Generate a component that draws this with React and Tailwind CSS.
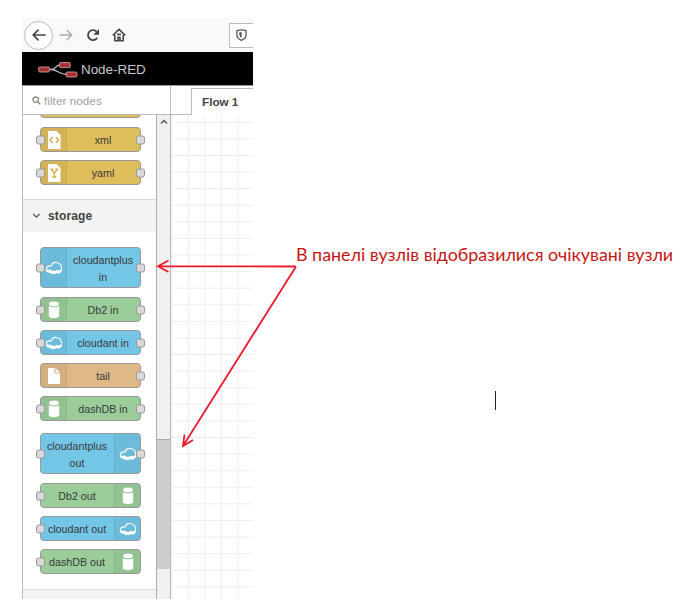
import React from "react";

const COLORS = {
  yellow: "bg-[#debd5c]",
  blue: "bg-[#73c6e6]",
  green: "bg-[#9acd99]",
  orange: "bg-[#deb887]",
};

function CloudIcon() {
  return (
    <svg width="18" height="14" viewBox="0 0 18 14">
      <path d="M.9 7.2C.4 9.8 1.6 12 4.4 11.6C6.5 13.6 9.6 13.4 11.2 12.2C14.6 13.3 17.6 11.2 17 7.2C15.8 9.2 13.6 9.6 11.6 8.9C9.6 10.3 7 10.1 5.6 8.6C3.6 9.2 1.6 8.6 .9 7.2Z" fill="#fff" />
      <path d="M1.4 7.4C1.6 5.6 3.4 4.7 6.2 4.9C7 2.4 9 1.2 11.2 1.5C14.6 1.9 16.6 4.2 16.5 7.2" fill="none" stroke="#fff" strokeWidth="1.2" strokeLinecap="round" />
    </svg>
  );
}

function DbIcon() {
  return (
    <svg width="12" height="18" viewBox="0 0 12 18">
      <ellipse cx="6" cy="2.9" rx="4.8" ry="2.4" fill="#fff" />
      <path d="M.8 4.8C2 6.8 10 6.8 11.2 4.8V15.3C10 17.9 2 17.9 .8 15.3Z" fill="#fff" />
    </svg>
  );
}

function FileIcon({ kind }) {
  return (
    <svg width="14" height="18" viewBox="0 0 14 18">
      {kind === "tail" ? (
        <path d="M1 1H7.4V6.6H13V17H1ZM8.4 1L13 5.6H8.4Z" fill="#fff" />
      ) : (
        <path d="M1 0H9.5L13.5 4V18H1Z" fill="#fff" />
      )}
      {kind === "xml" && (
        <path d="M5.7 6L2.8 9L5.7 12M8.8 6L11.7 9L8.8 12" fill="none" stroke="#d6ad45" strokeWidth="1.3" />
      )}
      {kind === "yaml" && (
        <path d="M3.2 5.2H6.4M8.4 5.2H11.6M4.5 5.3L7.3 9.3L10.3 5.3M7.3 9V13M5.4 13H9.3" fill="none" stroke="#d6ad45" strokeWidth="1.3" />
      )}
    </svg>
  );
}

function Port({ side }) {
  return (
    <span
      className={`absolute top-1/2 h-[9px] w-[9px] -translate-y-1/2 rounded-[2.5px] border border-[#999] bg-[#d9d9d9] ${
        side === "left" ? "-left-[5px]" : "-right-[5px]"
      }`}
    />
  );
}

function Node({ label, color, icon, right, tall, input = true, output = true }) {
  return (
    <div
      className={`relative flex w-[101px] shrink-0 rounded-[4px] border border-[#999] ${COLORS[color]} ${
        right ? "flex-row-reverse" : ""
      } ${tall ? "h-[41px]" : "h-[25px]"}`}
    >
      <div
        className={`flex w-[26px] shrink-0 items-center justify-center bg-black/5 ${
          right ? "rounded-r-[3px] border-l border-black/5" : "rounded-l-[3px] border-r border-black/5"
        }`}
      >
        {icon === "cloud" ? <CloudIcon /> : icon === "db" ? <DbIcon /> : <FileIcon kind={icon} />}
      </div>
      <div className="flex flex-1 items-center justify-center whitespace-pre pr-px pt-[2px] text-center text-[10.7px] leading-[16.6px] text-[#3a3a3a]">
        {label}
      </div>
      {input && <Port side="left" />}
      {output && <Port side="right" />}
    </div>
  );
}

function BrowserBar() {
  return (
    <div className="flex h-[34px] items-center bg-[#f9f9fa] text-[#444]">
      <div className="ml-[2px] flex h-[29px] w-[29px] items-center justify-center rounded-full border border-[#bbb] bg-white">
        <svg width="14" height="12" viewBox="0 0 14 12" fill="none" stroke="#444" strokeWidth="1.7" strokeLinecap="round" strokeLinejoin="round">
          <path d="M13 6H1.2M6 1.2L1.2 6L6 10.8" />
        </svg>
      </div>
      <svg className="ml-[6px]" width="14" height="12" viewBox="0 0 14 12" fill="none" stroke="#aaa" strokeWidth="1.4" strokeLinecap="round" strokeLinejoin="round">
        <path d="M1 6H12.8M8 1.2L12.8 6L8 10.8" />
      </svg>
      <svg className="ml-[13px]" width="14" height="14" viewBox="0 0 14 14" fill="none" stroke="#444" strokeWidth="1.8">
        <path d="M11.2 9.8A5 5 0 1 1 10.6 3.6" />
        <path d="M13 1V6.7H7.3Z" fill="#444" stroke="none" />
      </svg>
      <svg className="ml-[12px]" width="14" height="14" viewBox="0 0 14 14" fill="none" stroke="#444" strokeWidth="1.6" strokeLinejoin="round">
        <path d="M.8 7.4L7 1.2L13.2 7.4M2.8 7V12.8H11.2V7M6 12.5V9.2H8V12.5" />
        <path d="M5 6.4H9" />
      </svg>
      <div className="ml-auto flex h-[25px] w-[24px] items-center justify-center border border-r-0 border-[#bbb] bg-white">
        <svg width="11" height="12" viewBox="0 0 11 12" fill="none" stroke="#555" strokeWidth="1.3">
          <path d="M.9 1.6C4 .5 7 .5 10.1 1.6V5.5C10.1 8.2 8.5 10.2 5.5 11.3C2.5 10.2 .9 8.2 .9 5.5Z" />
          <path d="M5.6 3V8.8C4 7.9 3.2 7 3.2 3.4Z" fill="#555" stroke="none" />
        </svg>
      </div>
    </div>
  );
}

function Header() {
  return (
    <div className="flex h-[34px] items-center border-b border-[#999] bg-black pl-[16px] pt-[3px]">
      <svg width="40" height="18" viewBox="0 0 40 18">
        <path d="M10 8.5H14C18 8.5 17 4 22 4M13 8.5C20 8.5 20 13.5 29 13.5" fill="none" stroke="#bbb" strokeWidth="1.3" />
        <g fill="#a93030" stroke="#d0b0b0" strokeWidth=".8">
          <rect x=".6" y="6" width="10.8" height="5" rx="1.2" />
          <rect x="21.5" y="1.6" width="10.8" height="5" rx="1.2" />
          <rect x="28.2" y="11" width="10.8" height="5" rx="1.2" />
        </g>
      </svg>
      <span className="ml-[3px] text-[13.4px] leading-none text-[#c7c7c7]">Node-RED</span>
    </div>
  );
}

function Palette() {
  return (
    <div className="flex h-[484px] w-[133px] flex-col items-start overflow-hidden bg-white">
      <div className="-mt-[22px] mb-[9px] ml-[17px] h-[25px] w-[101px] shrink-0 rounded-[4px] border border-[#999] bg-[#debd5c]" />
      <div className="ml-[17px] flex flex-col gap-[8px]">
        <Node label="xml" color="yellow" icon="xml" />
        <Node label="yaml" color="yellow" icon="yaml" />
      </div>
      <div className="mt-[14px] flex h-[33px] w-full shrink-0 items-center border-t border-[#ddd] bg-[#f3f3f3] pl-[9px]">
        <svg width="9" height="6" viewBox="0 0 9 6" fill="none" stroke="#555" strokeWidth="1.2">
          <path d="M1.2 1L4.4 4.2L7.6 1" />
        </svg>
        <span className="ml-[7px] text-[12px] font-bold tracking-[.15px] text-[#444]">storage</span>
      </div>
      <div className="ml-[17px] mt-[15px] flex flex-col gap-[8px]">
        <Node label={"cloudantplus\nin"} color="blue" icon="cloud" tall />
        <div className="mt-px flex flex-col gap-[8px]">
          <Node label="Db2 in" color="green" icon="db" />
          <Node label="cloudant in" color="blue" icon="cloud" />
          <Node label="tail" color="orange" icon="tail" input={false} />
          <Node label="dashDB in" color="green" icon="db" />
        </div>
      </div>
      <div className="ml-[17px] mt-[12px] flex flex-col gap-[8px]">
        <Node label={"cloudantplus\nout"} color="blue" icon="cloud" tall right />
        <div className="mt-px flex flex-col gap-[8px]">
          <Node label="Db2 out" color="green" icon="db" right output={false} />
          <Node label="cloudant out" color="blue" icon="cloud" right output={false} />
          <Node label="dashDB out" color="green" icon="db" right output={false} />
        </div>
      </div>
      <div className="mt-[15px] h-[20px] w-full shrink-0 border-t border-[#ddd] bg-[#f3f3f3]" />
    </div>
  );
}

function Sidebar() {
  return (
    <div className="flex w-[149px] flex-col border-x border-[#bbb]">
      <div className="flex h-[29px] items-center border-b border-[#bbb] bg-white pl-[9px]">
        <svg width="9" height="9" viewBox="0 0 9 9" fill="none" stroke="#888" strokeWidth="1.4">
          <circle cx="3.7" cy="3.7" r="2.7" />
          <path d="M5.7 5.7L8.2 8.2" />
        </svg>
        <span className="ml-[3px] pt-px text-[11.7px] tracking-[.05px] text-[#a0a0a0]">filter nodes</span>
      </div>
      <div className="flex h-[484px]">
        <Palette />
        <div className="flex w-[14px] flex-col border-l border-[#aaa] bg-[#f0f0f0]">
          <div className="flex h-[14px] items-center justify-center">
            <svg width="8" height="6" viewBox="0 0 8 6" fill="none" stroke="#555" strokeWidth="1.4">
              <path d="M1 4.6L4 1.6L7 4.6" />
            </svg>
          </div>
          <div className="mt-[310px] h-[130px] border-t border-[#aaa] bg-[#cdcdcd]" />
        </div>
      </div>
    </div>
  );
}

function Workspace() {
  return (
    <div className="flex flex-1 flex-col bg-white">
      <div className="flex h-[29px] items-end">
        <div className="h-full w-[20px] border-b border-[#bbb]" />
        <div className="flex h-[27px] flex-1 items-center border-l border-t border-[#bbb] pl-[10px] text-[11.7px] font-bold text-[#444]">
          Flow 1
        </div>
      </div>
      <svg width="82" height="484" viewBox="0 0 82 484" stroke="#eee" strokeWidth="1">
        {Array.from({ length: 5 }, (_, i) => (
          <path key={"v" + i} d={`M${0.7 + i * 16.6} 0V484`} />
        ))}
        {Array.from({ length: 29 }, (_, i) => (
          <path key={"h" + i} d={`M0 ${7.3 + i * 16.59}H82`} />
        ))}
      </svg>
    </div>
  );
}

export default function App() {
  return (
    <div className="relative h-[610px] w-[699px] overflow-hidden bg-white pl-[22px] pt-[18px] font-['Liberation_Sans',Arial,sans-serif]">
      <div className="flex h-[581px] w-[231px] flex-col overflow-hidden">
        <BrowserBar />
        <Header />
        <div className="flex h-[513px]">
          <Sidebar />
          <Workspace />
        </div>
      </div>
      <svg className="absolute left-0 top-0" width="699" height="610" viewBox="0 0 699 610" fill="none" stroke="#ea1c2d" strokeWidth="1.8">
        <path d="M296 266.5L158 266.2M168.5 260.5L158 266.2L168.5 272" />
        <path d="M296 266.5L183 446M184.5 434.5L183 446L193 440" />
      </svg>
      <div className="absolute left-[296px] top-[242px] whitespace-nowrap font-['Lato','Open_Sans',sans-serif] text-[17.85px] leading-[24px] text-[#c81414]">
        В панелі вузлів відобразилися очікувані вузли
      </div>
      <div className="absolute left-[495px] top-[391px] h-[19px] w-px bg-[#222]" />
    </div>
  );
}
